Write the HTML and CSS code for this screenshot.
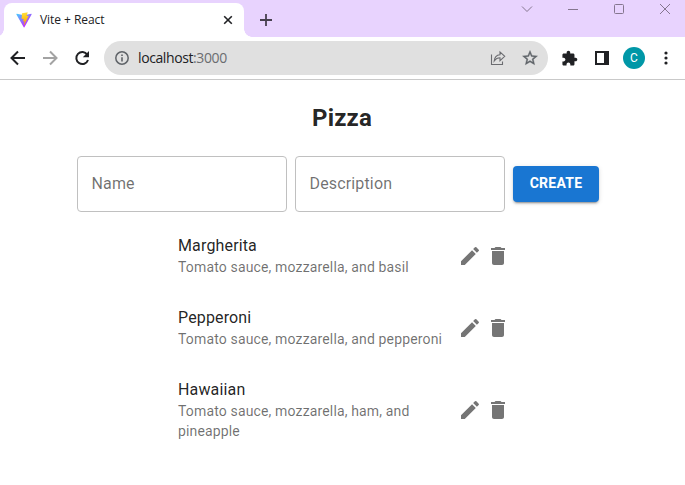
FILE: index.html
```html
<!DOCTYPE html>
<html lang="en">
<head>
<meta charset="utf-8">
<title>Vite + React</title>
<link rel="stylesheet" href="styles.css">
</head>
<body>
<header class="browser">
  <div class="tabstrip">
    <div class="tab">
      <svg class="favicon" width="16" height="16" viewBox="0 0 410 404">
        <defs>
          <linearGradient id="shield" x1="6" y1="33" x2="235" y2="344" gradientUnits="userSpaceOnUse"><stop stop-color="#41D1FF"/><stop offset="1" stop-color="#BD34FE"/></linearGradient>
          <linearGradient id="bolt" x1="194" y1="9" x2="236" y2="293" gradientUnits="userSpaceOnUse"><stop stop-color="#FFEA83"/><stop offset=".08" stop-color="#FFDD35"/><stop offset="1" stop-color="#FFA800"/></linearGradient>
        </defs>
        <path fill="url(#shield)" d="M399.6 59.5 215.6 388.5c-3.8 6.8-13.5 6.9-17.4.1L10.6 59.6c-4.3-7.5 2.2-16.5 10.6-15l184.2 32.9c1.2.2 2.4.2 3.5 0L389.3 44.6c8.5-1.5 14.9 7.4 10.3 14.9z"/>
        <path fill="url(#bolt)" d="M293 1.6 156.8 28.3c-2.2.4-3.9 2.3-4 4.6l-8.4 141.4c-.2 3.4 2.9 6 6.1 5.2l37.9-8.8c3.6-.8 6.8 2.3 6 6l-11.2 55.1c-.8 3.7 2.7 6.9 6.3 5.8l23.4-7.1c3.6-1.1 7.1 2.1 6.3 5.8l-17.9 86.7c-1.1 5.4 6.1 8.4 9.1 3.8l2-3.1L323.6 102c1.9-3.7-1.3-7.9-5.4-7.1l-39.1 7.5c-3.7.7-6.8-2.7-5.8-6.3l25.5-88.3c1-3.6-2.1-7-5.8-6.2z"/>
      </svg>
      <span class="tab-title">Vite + React</span>
      <svg class="tab-close" width="10" height="10" viewBox="0 0 10 10"><path d="M1.2 1.2l7.6 7.6M8.8 1.2 1.2 8.8" stroke="#202124" stroke-width="1.6"/></svg>
    </div>
    <svg class="new-tab" width="12" height="12" viewBox="0 0 12 12"><path d="M6 0v12M0 6h12" stroke="#47404f" stroke-width="1.8"/></svg>
    <div class="window-controls">
      <svg width="12" height="12" viewBox="0 0 12 12"><path d="M1 3.5l5 5 5-5"/></svg>
      <svg width="12" height="12" viewBox="0 0 12 12"><path d="M1 6.5h10"/></svg>
      <svg width="12" height="12" viewBox="0 0 12 12"><rect x="1.5" y="1.5" width="9" height="9" rx="1"/></svg>
      <svg width="12" height="12" viewBox="0 0 12 12"><path d="M1 1l10 10M11 1 1 11"/></svg>
    </div>
  </div>
  <div class="toolbar">
    <nav class="nav">
      <svg width="16" height="16" viewBox="0 0 16 16"><path d="M15 8H2M8 1.5 1.5 8 8 14.5" stroke="#202124"/></svg>
      <svg width="16" height="16" viewBox="0 0 16 16"><path d="M1 8h13M8 1.5 14.5 8 8 14.5" stroke="#a3a3a3"/></svg>
      <svg width="16" height="16" viewBox="0 0 16 16"><path d="M13.3 4.7A6 6 0 1 0 14 10" stroke="#202124"/><path d="M15 1v6.2H8.8z" fill="#202124"/></svg>
    </nav>
    <div class="omnibox">
      <svg width="14" height="14" viewBox="0 0 14 14"><circle cx="7" cy="7" r="6.2" fill="none" stroke="#5f6368" stroke-width="1.5"/><path d="M7 6.2v4.3M7 3.5v1.6" stroke="#5f6368" stroke-width="1.6"/></svg>
      <span class="url">localhost<span class="port">:3000</span></span>
      <svg class="share" width="16" height="16" viewBox="0 0 16 16"><path d="M1.5 4.5v10h11v-3M4.2 11C4.5 7 6.5 5 10 4.7V1.9l4.7 4.4-4.7 4.4V7.8C7.3 7.8 5.7 8.8 4.2 11z" fill="none" stroke="#6b6c70" stroke-width="1.1"/></svg>
      <svg width="18" height="18" viewBox="0 0 24 24"><path fill="#5f6368" stroke="#5f6368" stroke-width=".5" d="M22 9.24l-7.19-.62L12 2 9.19 8.63 2 9.24l5.46 4.73L5.82 21 12 17.27 18.18 21l-1.63-7.03L22 9.24zM12 15.4l-3.76 2.27 1-4.28-3.32-2.88 4.38-.38L12 6.1l1.71 4.04 4.38.38-3.32 2.88 1 4.28L12 15.4z"/></svg>
    </div>
    <div class="actions">
      <svg width="17" height="17" viewBox="0 0 24 24"><path fill="#202124" d="M20.5 11H19V7c0-1.1-.9-2-2-2h-4V3.5C13 2.12 11.88 1 10.5 1S8 2.12 8 3.5V5H4c-1.1 0-1.99.9-1.99 2v3.8H3.5c1.49 0 2.7 1.21 2.7 2.7s-1.21 2.7-2.7 2.7H2V20c0 1.1.9 2 2 2h3.8v-1.5c0-1.49 1.21-2.7 2.7-2.7 1.49 0 2.7 1.21 2.7 2.7V22H17c1.1 0 2-.9 2-2v-4h1.5c1.38 0 2.5-1.12 2.5-2.5S21.88 11 20.5 11z"/></svg>
      <svg class="panel" width="14" height="14" viewBox="0 0 14 14"><path d="M0 0h14v14H0zM2 2v10h7V2z" fill="#202124" fill-rule="evenodd"/></svg>
      <span class="avatar">C</span>
      <svg class="more" width="4" height="14" viewBox="0 0 4 14"><g fill="#202124"><circle cx="2" cy="2" r="1.6"/><circle cx="2" cy="7" r="1.6"/><circle cx="2" cy="12" r="1.6"/></g></svg>
    </div>
  </div>
</header>
<main class="page">
  <h2 class="heading">Pizza</h2>
  <form class="form">
    <div class="field">Name</div>
    <div class="field">Description</div>
    <button class="create" type="button">CREATE</button>
  </form>
  <ul class="list">
    <li class="item">
      <div class="text"><div class="name">Margherita</div><div class="desc">Tomato sauce, mozzarella, and basil</div></div>
      <svg viewBox="0 0 24 24"><use href="#edit"/></svg>
      <svg viewBox="0 0 24 24"><use href="#delete"/></svg>
    </li>
    <li class="item">
      <div class="text"><div class="name">Pepperoni</div><div class="desc">Tomato sauce, mozzarella, and pepperoni</div></div>
      <svg viewBox="0 0 24 24"><use href="#edit"/></svg>
      <svg viewBox="0 0 24 24"><use href="#delete"/></svg>
    </li>
    <li class="item">
      <div class="text"><div class="name">Hawaiian</div><div class="desc">Tomato sauce, mozzarella, ham, and pineapple</div></div>
      <svg viewBox="0 0 24 24"><use href="#edit"/></svg>
      <svg viewBox="0 0 24 24"><use href="#delete"/></svg>
    </li>
  </ul>
</main>
<svg width="0" height="0">
  <defs>
    <path id="edit" d="M3 17.25V21h3.75L17.81 9.94l-3.75-3.75L3 17.25zM20.71 7.04c.39-.39.39-1.02 0-1.41l-2.34-2.34a.996.996 0 0 0-1.41 0l-1.83 1.83 3.75 3.75 1.83-1.83z"/>
    <path id="delete" d="M6 19c0 1.1.9 2 2 2h8c1.1 0 2-.9 2-2V7H6v12zM19 4h-3.5l-1-1h-5l-1 1H5v2h14V4z"/>
  </defs>
</svg>
</body>
</html>
```
FILE: styles.css
```css
* { box-sizing: border-box; }

body {
  margin: 0;
  height: 485px;
  overflow: hidden;
  background: #fff;
  color: rgba(0, 0, 0, .87);
  font-family: Roboto, sans-serif;
}

svg { display: block; flex: none; }

.tabstrip {
  display: flex;
  height: 37px;
  background: #e8d3fe;
}

.tab {
  position: relative;
  display: flex;
  align-items: center;
  width: 240px;
  height: 34px;
  margin: 3px 0 0 4px;
  padding: 0 11px 0 12px;
  border-radius: 8px 8px 0 0;
  background: #fff;
}

.tab::before,
.tab::after {
  content: "";
  position: absolute;
  bottom: 0;
  width: 8px;
  height: 8px;
}

.tab::before { left: -8px; background: radial-gradient(circle at 0 0, transparent 7.5px, #fff 8px); }
.tab::after { right: -8px; background: radial-gradient(circle at 100% 0, transparent 7.5px, #fff 8px); }

.tab-title {
  flex: 1;
  margin-left: 8px;
  padding-bottom: 1px;
  color: #202124;
  font: 12px "Open Sans", sans-serif;
  letter-spacing: -.05px;
}

.new-tab { margin: 14px 0 0 16px; }

.window-controls {
  display: flex;
  gap: 34px;
  margin: 3px 14px 0 auto;
  fill: none;
  stroke: #85768f;
  stroke-width: 1;
}

.toolbar {
  display: flex;
  align-items: center;
  height: 43px;
  padding-left: 10px;
  border-bottom: 1px solid #c9c9c9;
}

.nav {
  display: flex;
  gap: 16px;
  fill: none;
  stroke-width: 2;
}

.omnibox {
  display: flex;
  align-items: center;
  width: 444px;
  height: 34px;
  margin-left: 14px;
  padding: 0 9px 0 11px;
  border-radius: 17px;
  background: #e0e0e0;
}

.url {
  flex: 1;
  margin-left: 9px;
  padding-bottom: 2px;
  color: #202124;
  font: 14px "Open Sans", sans-serif;
  letter-spacing: -.4px;
}

.port { color: #6b6d70; }
.share { margin-right: 15px; }

.actions {
  display: flex;
  align-items: center;
  margin-left: 13px;
}

.panel { margin-left: 17px; }

.avatar {
  width: 22px;
  height: 22px;
  margin-left: 14px;
  border-radius: 50%;
  background: #0097a7;
  color: #fff;
  font-size: 12px;
  line-height: 22px;
  text-align: center;
}

.more { margin-left: 19px; }

.heading {
  margin: 22px 1px 22px 0;
  font-size: 24px;
  font-weight: 700;
  line-height: 32px;
  letter-spacing: .15px;
  text-align: center;
}

.form {
  display: flex;
  align-items: center;
  gap: 8px;
  margin: 0 0 8px 77px;
}

.field {
  width: 210px;
  height: 56px;
  padding: 0 13.5px;
  border: 1px solid #c0c0c0;
  border-radius: 4px;
  color: rgba(0, 0, 0, .57);
  font-size: 16px;
  line-height: 54px;
  letter-spacing: .15px;
}

.create {
  width: 86px;
  height: 36px;
  padding: 0 0 2px;
  border: 0;
  border-radius: 4px;
  background: #1976d2;
  box-shadow: 0 3px 1px -2px rgba(0, 0, 0, .2), 0 2px 2px rgba(0, 0, 0, .14), 0 1px 5px rgba(0, 0, 0, .12);
  color: #fff;
  font: 700 14px/24px Roboto, sans-serif;
  letter-spacing: .25px;
}

.list {
  width: 360px;
  margin: 0 0 0 162px;
  padding: 0;
  list-style: none;
}

.item {
  display: flex;
  align-items: center;
  gap: 4px;
  padding: 14px 12px 14px 16px;
}

.item svg {
  width: 24px;
  height: 24px;
  fill: #757575;
}

.text { flex: 1; }

.name {
  font-size: 16px;
  line-height: 24px;
  letter-spacing: .15px;
}

.desc {
  margin: -1px 0 1px;
  color: rgba(0, 0, 0, .57);
  font-size: 14px;
  line-height: 20px;
  letter-spacing: .15px;
}
```
